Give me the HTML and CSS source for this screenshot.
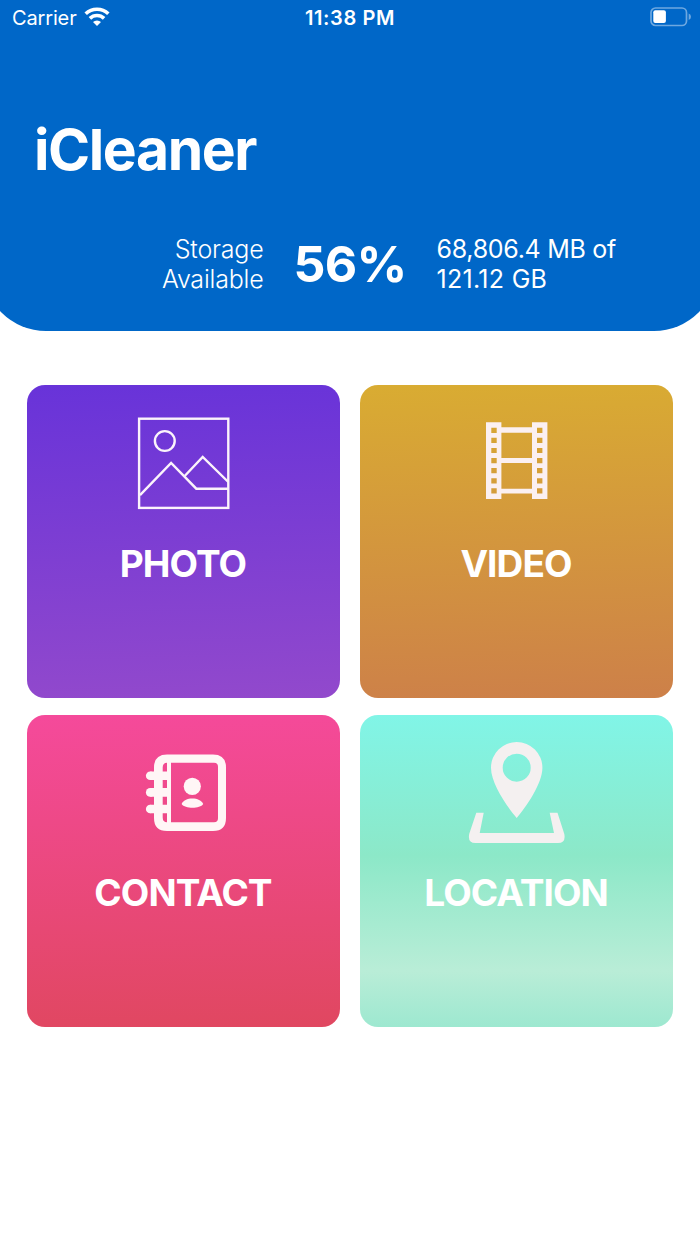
FILE: index.html
```html
<!DOCTYPE html>
<html lang="en">
<head>
    <meta charset="UTF-8">
    <title>iCleaner</title>
    <link rel="stylesheet" href="styles.css">
</head>

<body>

<header class="header">
    <div class="status-bar">
        <div class="carrier">
            <span class="carrier-name">Carrier</span>
            <svg class="wifi" width="26" height="20" viewBox="0 0 26 20">
                <path d="M13 19 L9 15 A5.8 5.8 0 0 1 17 15 Z" fill="#fff"/>
                <path d="M5.9 11.4 A10.2 10.2 0 0 1 20.1 11.4" fill="none" stroke="#fff" stroke-width="3.6"/>
                <path d="M1.7 6.8 A16.3 16.3 0 0 1 24.3 6.8" fill="none" stroke="#fff" stroke-width="3.6"/>
            </svg>
        </div>
        <span class="time">11:38 PM</span>
        <svg class="battery" width="42" height="20" viewBox="0 0 42 20">
            <rect x="1" y="1" width="35.5" height="17.5" rx="4.5" fill="none" stroke="#6ea8e0" stroke-width="1.7"/>
            <rect x="3.3" y="3.3" width="12.6" height="12.6" rx="2" fill="#fff"/>
            <path d="M38.7 6.5 Q41 7.5 41 9.8 Q41 12 38.7 13 Z" fill="#6ea8e0"/>
        </svg>
    </div>

    <h1>iCleaner</h1>

    <div class="storage">
        <p class="storage-label">Storage<br>Available</p>
        <p class="storage-percent">56%</p>
        <p class="storage-size">68,806.4 MB of<br><span class="total">121.12 GB</span></p>
    </div>
</header>

<main class="grid">
    <div class="card photo">
        <svg class="icon" viewBox="0 0 121 120" fill="none" stroke="#fbf3fb" stroke-width="2.4">
            <rect x="16.1" y="13.7" width="89.2" height="89.2"/>
            <circle cx="41.8" cy="36" r="9.9"/>
            <path d="M17 90.2 L48.1 58 L73.3 83.7 H105"/>
            <path d="M61.7 71 L79.7 52 L105.3 77"/>
        </svg>
        <h2>PHOTO</h2>
    </div>

    <div class="card video">
        <svg class="icon" viewBox="0 0 121 120">
            <!-- rails, dashed lines cut the sprocket holes -->
            <mask id="holes">
                <rect width="121" height="120" fill="#fff"/>
                <path d="M38 22.7 V89 M83.7 22.7 V89" stroke="#000" stroke-width="5.4" stroke-dasharray="5.2 4.9"/>
            </mask>
            <path d="M30 17.3 H45.4 V22.3 H76 V17.3 H91.4 V94 H76 V88.5 H45.4 V94 H30 Z M45.4 27.7 V53.1 H76 V27.7 Z M45.4 58 V83.8 H76 V58 Z" fill="#fbf0f1" fill-rule="evenodd" mask="url(#holes)"/>
        </svg>
        <h2>VIDEO</h2>
    </div>

    <div class="card contact">
        <svg class="icon" viewBox="0 -0.5 121 120" fill="#fff6f6">
            <path d="M44 20 H90 Q103 20 103 33 V83.5 Q103 96.5 90 96.5 H44 Q31 96.5 31 83.5 V33 Q31 20 44 20 Z M44 28.2 Q39.7 28.2 39.7 33 V83 Q39.7 87.8 44 87.8 Z M48 28.2 V87.8 H91 Q95 87.8 95 83.8 V32.2 Q95 28.2 91 28.2 Z" fill-rule="evenodd"/>
            <path d="M27.2 41.2 H44 M27.2 57.9 H44 M27.2 74.5 H44" stroke="#fff6f6" stroke-width="8.6"/>
            <circle cx="27.2" cy="41.2" r="4.3"/>
            <circle cx="27.2" cy="57.9" r="4.3"/>
            <circle cx="27.2" cy="74.5" r="4.3"/>
            <circle cx="69.3" cy="51.8" r="8.6"/>
            <path d="M58.6 69.5 C61 62 77.6 62 80.2 69.5 C77 74.5 62 74.5 58.6 69.5 Z"/>
        </svg>
        <h2>CONTACT</h2>
    </div>

    <div class="card location">
        <svg class="icon" viewBox="0 -0.5 121 120" fill="#f4f0f0">
            <path d="M60.7 83.5 C51 72 35 49 35 33.2 A25.7 25.7 0 0 1 86.4 33.2 C86.4 49 70.4 72 60.7 83.5 Z M60.7 19.2 A14 14 0 1 0 60.7 47.2 A14 14 0 1 0 60.7 19.2 Z" fill-rule="evenodd"/>
            <path d="M20.3 78.2 H27.7 L23.7 98.5 H98 L93.7 78.2 H101.5 L108.3 99.5 Q110 108.5 102 108.5 H19.5 Q11.5 108.5 13.2 99.5 Z"/>
        </svg>
        <h2>LOCATION</h2>
    </div>
</main>

</body>
</html>
```

FILE: styles.css
```css
body {
    font-family: Inter, "Liberation Sans", sans-serif;
    background: #fff;
    color: #fff;
    margin: 0;
    overflow-x: hidden;
}
h1, h2, p {
    margin: 0;
}
.header {
    box-sizing: border-box;
    height: 331px;
    margin: 0 -17px;
    padding: 0 17px;
    background: #0067c8;
    border-radius: 0 0 63px 63px;
}
.status-bar {
    display: grid;
    grid-template-columns: 1fr auto 1fr;
    align-items: center;
    height: 35px;
    padding: 0 8px 0 12px;
    font-size: 20px;
    line-height: 35px;
}
.carrier {
    display: flex;
    align-items: center;
    gap: 7px;
}
.carrier-name {
    padding-top: 1px;
    letter-spacing: -0.15px;
}
.wifi {
    margin-bottom: 2px;
}
.time {
    padding-top: 1px;
    margin-right: 4px;
    font-weight: 600;
    letter-spacing: 0.6px;
}
.battery {
    justify-self: end;
    margin-bottom: 2px;
}
h1 {
    padding: 80px 0 0 34px;
    font-size: 57px;
    line-height: 70px;
    font-weight: 700;
    letter-spacing: -1.4px;
}
.storage {
    display: grid;
    grid-template-columns: 263.5px 173px 1fr;
    align-items: center;
    margin-top: 49px;
    font-size: 25px;
    line-height: 30px;
}
.storage-label {
    text-align: right;
    font-weight: 300;
    letter-spacing: -0.2px;
}
.storage-percent {
    text-align: center;
    font-size: 50px;
    font-weight: 700;
    letter-spacing: -0.8px;
}
.storage-size {
    letter-spacing: -0.3px;
}
.total {
    letter-spacing: 0.3px;
}
.grid {
    display: grid;
    grid-template-columns: 313px 313px;
    grid-auto-rows: 312.5px;
    gap: 17px 20px;
    padding: 54.4px 27px 0;
}
.card {
    display: flex;
    flex-direction: column;
    align-items: center;
    padding-top: 19.5px;
    box-sizing: border-box;
    border-radius: 18px;
}
.icon {
    width: 121px;
    height: 120px;
}
h2 {
    margin: 17px 1px 0 0;
    font-size: 37px;
    line-height: 44px;
    font-weight: 700;
    letter-spacing: -0.9px;
}
.photo {
    background: linear-gradient(178deg, #6833d9, #9249cc);
}
.video {
    background: linear-gradient(178deg, #d9ac32, #cd8049);
}
.contact {
    background: linear-gradient(178deg, #f54a9b, #e04760);
}
.location {
    background: linear-gradient(180deg, #81f5e7, #8ce8c8 45%, #b9edd7 82%, #9de8d0);
}
```
